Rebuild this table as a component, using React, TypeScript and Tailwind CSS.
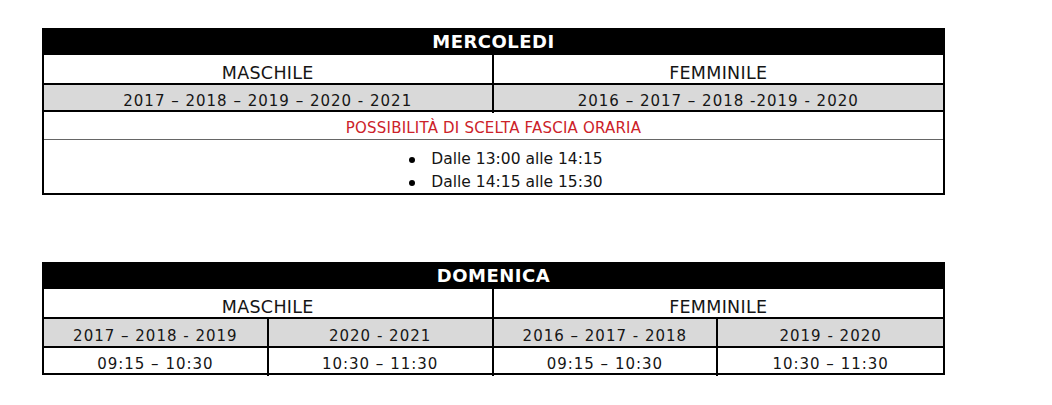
const font = "font-['DejaVu_Sans','Liberation_Sans',sans-serif]";

function GenderRow() {
  return (
    <div className="grid grid-cols-2 h-[30px] border-b-2 border-black">
      <div className="flex items-center justify-center pt-[5px] border-r-2 border-black text-[17.5px] tracking-[0.3px]">MASCHILE</div>
      <div className="flex items-center justify-center pt-[5px] text-[17.5px] tracking-[0.3px]">FEMMINILE</div>
    </div>
  );
}

function Mercoledi() {
  return (
    <div className="w-[903px] border-2 border-black border-t-0">
      <div className="h-[27px] bg-black flex items-center justify-center">
        <span className="text-white font-bold text-[18px] tracking-[0.5px] leading-none">MERCOLEDI</span>
      </div>
      <GenderRow />
      <div className="grid grid-cols-2 h-[27px] border-b-2 border-black bg-[#d9d9d9]">
        <div className="flex items-center justify-center pt-[5px] border-r-2 border-black text-[15px] tracking-[1px]">
          2017 – 2018 – 2019 – 2020 - 2021
        </div>
        <div className="flex items-center justify-center pt-[5px] text-[15px] tracking-[1px]">
          2016 – 2017 – 2018 -2019 - 2020
        </div>
      </div>
      <div className="h-[28px] border-b border-[#666] flex items-center justify-center pt-[5px] text-[#cc2229] text-[15px] tracking-[0.2px]">
        POSSIBILITÀ DI SCELTA FASCIA ORARIA
      </div>
      <div className="h-[53px] flex justify-center pl-[25px] pt-[8px]">
        <div className="flex flex-col">
          {['Dalle 13:00 alle 14:15', 'Dalle 14:15 alle 15:30'].map((t) => (
            <div key={t} className="flex items-center gap-[16px] h-[24px] text-[15.5px]">
              <span className="w-[6px] h-[6px] rounded-full bg-black" />
              <span>{t}</span>
            </div>
          ))}
        </div>
      </div>
    </div>
  );
}

function Domenica() {
  const years = ['2017 – 2018 - 2019', '2020 - 2021', '2016 – 2017 - 2018', '2019 - 2020'];
  const times = ['09:15 – 10:30', '10:30 – 11:30', '09:15 – 10:30', '10:30 – 11:30'];
  return (
    <div className="w-[903px] border-2 border-black border-t-0">
      <div className="h-[27px] bg-black flex items-center justify-center">
        <span className="text-white font-bold text-[18px] tracking-[0.5px] leading-none">DOMENICA</span>
      </div>
      <GenderRow />
      <div className="grid grid-cols-4 h-[29px] border-b-2 border-black bg-[#d9d9d9]">
        {years.map((y, i) => (
          <div
            key={i}
            className={`flex items-center justify-center pt-[6px] text-[15px] tracking-[1px] ${i < 3 ? 'border-r-2 border-black' : ''}`}
          >
            {y}
          </div>
        ))}
      </div>
      <div className="grid grid-cols-4 h-[25px]">
        {times.map((t, i) => (
          <div
            key={i}
            className={`flex items-center justify-center pt-[5px] text-[15px] tracking-[1px] ${i < 3 ? 'border-r-2 border-black' : ''}`}
          >
            {t}
          </div>
        ))}
      </div>
    </div>
  );
}

export default function App() {
  return (
    <div className={`w-[1052px] h-[405px] bg-white text-[#151515] ${font} pt-[28px] pl-[42px] flex flex-col gap-[67px]`}>
      <Mercoledi />
      <Domenica />
    </div>
  );
}
